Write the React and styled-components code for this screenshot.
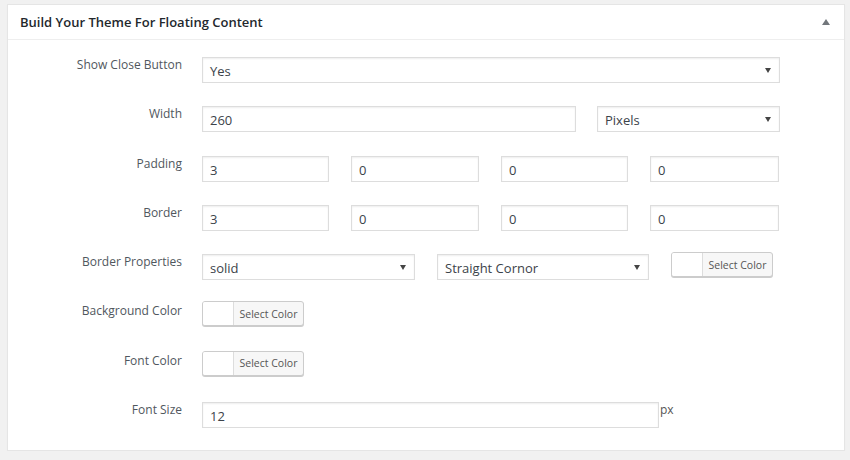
import React from "react";
import styled, { createGlobalStyle } from "styled-components";

const Global = createGlobalStyle`
  html, body { margin: 0; padding: 0; }
  body {
    background: #f1f1f1;
    font-family: "Open Sans", "Noto Sans", sans-serif;
    color: #444;
  }
`;

const Page = styled.div`
  padding: 4px 5px 0 7px;
`;

const Panel = styled.section`
  width: 838px;
  height: 447px;
  box-sizing: border-box;
  background: #fff;
  border: 1px solid #e5e5e5;
  box-shadow: 0 1px 1px rgba(0, 0, 0, 0.04);
`;

const Header = styled.header`
  height: 35px;
  box-sizing: border-box;
  border-bottom: 1px solid #eee;
  display: flex;
  align-items: center;
  justify-content: space-between;
  padding: 0 14px 0 12px;
`;

const Title = styled.h2`
  margin: 0;
  font-size: 13px;
  font-weight: 600;
  color: #23282d;
`;

const Toggle = styled.button`
  border: 0;
  background: none;
  padding: 0;
  display: flex;
  cursor: pointer;
`;

const Form = styled.div`
  display: grid;
  grid-template-columns: 174px 1fr;
  grid-auto-rows: 49.3px;
  column-gap: 20px;
  padding-top: 17px;
`;

const Label = styled.div`
  text-align: right;
  font-size: 12px;
  line-height: 16px;
  color: #50575e;
`;

const Field = styled.div`
  display: flex;
  align-items: flex-start;
  gap: ${(p) => p.$gap ?? 21}px;
`;

const Input = styled.input`
  box-sizing: border-box;
  width: ${(p) => p.$w}px;
  height: 26px;
  border: 1px solid #ddd;
  box-shadow: inset 0 1px 2px rgba(0, 0, 0, 0.07);
  background: #fff;
  padding: 2px 7px 0;
  font-family: inherit;
  font-size: 13px;
  color: #3c434a;
  outline: none;
`;

const SelectBox = styled.div`
  box-sizing: border-box;
  width: ${(p) => p.$w}px;
  height: 26px;
  border: 1px solid #ddd;
  box-shadow: inset 0 1px 2px rgba(0, 0, 0, 0.07);
  background: #fff;
  display: flex;
  align-items: center;
  justify-content: space-between;
  padding: 2px 8px 0 7px;
  font-size: 13px;
  color: #3c434a;
`;

const Caret = styled.svg`
  width: 6px;
  height: 5px;
  margin-top: -2px;
  fill: #444;
`;

const ColorButton = styled.button`
  box-sizing: border-box;
  height: 25px;
  width: 102px;
  margin-top: ${(p) => p.$mt ?? -2}px;
  padding: 0;
  display: flex;
  border: 1px solid #ccc;
  border-radius: 3px;
  box-shadow: 0 1px 0 #ccc;
  background: #f7f7f7;
  overflow: hidden;
  font-family: inherit;
  cursor: pointer;
`;

const Swatch = styled.span`
  width: 30px;
  background: #fff;
  border-right: 1px solid #ddd;
`;

const ButtonText = styled.span`
  flex: 1;
  display: flex;
  align-items: center;
  justify-content: center;
  font-size: 10.5px;
  color: #555;
`;

const Unit = styled.span`
  font-size: 12px;
  line-height: 16px;
  color: #555;
  margin-left: -20px;
`;

const Select = ({ w, children }) => (
  <SelectBox $w={w}>
    <span>{children}</span>
    <Caret viewBox="0 0 6 5">
      <path d="M0 0h6L3 5z" />
    </Caret>
  </SelectBox>
);

const Color = ({ mt }) => (
  <ColorButton $mt={mt}>
    <Swatch />
    <ButtonText>Select Color</ButtonText>
  </ColorButton>
);

export default function App() {
  return (
    <>
      <Global />
      <Page>
        <Panel>
          <Header>
            <Title>Build Your Theme For Floating Content</Title>
            <Toggle aria-label="Toggle panel">
              <svg width="8" height="6" viewBox="0 0 8 6">
                <path d="M0 6h8L4 0z" fill="#72777c" />
              </svg>
            </Toggle>
          </Header>
          <Form>
            <Label>Show Close Button</Label>
            <Field>
              <Select w={578}>Yes</Select>
            </Field>

            <Label>Width</Label>
            <Field>
              <Input $w={374} defaultValue="260" />
              <Select w={183}>Pixels</Select>
            </Field>

            <Label>Padding</Label>
            <Field $gap={22}>
              <Input $w={127} defaultValue="3" />
              <Input $w={128} defaultValue="0" />
              <Input $w={127} defaultValue="0" />
              <Input $w={129} defaultValue="0" />
            </Field>

            <Label>Border</Label>
            <Field $gap={22}>
              <Input $w={127} defaultValue="3" />
              <Input $w={128} defaultValue="0" />
              <Input $w={127} defaultValue="0" />
              <Input $w={129} defaultValue="0" />
            </Field>

            <Label>Border Properties</Label>
            <Field $gap={22}>
              <Select w={213}>solid</Select>
              <Select w={212}>Straight Cornor</Select>
              <Color mt={-2} />
            </Field>

            <Label>Background Color</Label>
            <Field>
              <Color />
            </Field>

            <Label>Font Color</Label>
            <Field>
              <Color />
            </Field>

            <Label>Font Size</Label>
            <Field>
              <Input $w={457} defaultValue="12" />
              <Unit>px</Unit>
            </Field>
          </Form>
        </Panel>
      </Page>
    </>
  );
}
